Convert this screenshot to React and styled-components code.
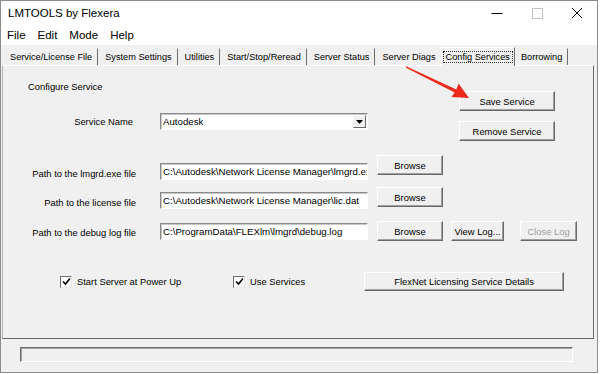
import React from 'react';
import styled, { createGlobalStyle } from 'styled-components';

const GlobalStyle = createGlobalStyle`
  html, body { margin: 0; padding: 0; background: #fff; }
  body {
    width: 600px;
    height: 374px;
    overflow: hidden;
    font-family: "Liberation Sans", Arial, sans-serif;
    color: #000;
  }
`;

const Window = styled.div`
  width: 598px;
  height: 373px;
  box-sizing: border-box;
  border: 1px solid #8c8c8c;
  background: #f0f0f0;
  display: flex;
  flex-direction: column;
`;

const TitleBar = styled.div`
  height: 24px;
  background: #fff;
  display: flex;
  align-items: center;
  padding-left: 7px;
  font-size: 11.5px;
`;

const Title = styled.span`
  flex: 1;
`;

const Controls = styled.div`
  display: flex;
  height: 100%;
`;

const ControlButton = styled.div`
  width: 40px;
  height: 100%;
  display: flex;
  align-items: center;
  justify-content: center;
`;

const MenuBar = styled.div`
  height: 20px;
  background: #fff;
  display: flex;
  align-items: center;
  padding-left: 6px;
  gap: 12px;
  font-size: 11.5px;
`;

const TabStrip = styled.div`
  height: 20px;
  display: flex;
  align-items: flex-end;
  padding-left: 2px;
`;

const Tab = styled.div`
  flex-shrink: 0;
  white-space: nowrap;
  height: ${p => (p.$active ? 19 : 17)}px;
  box-sizing: border-box;
  display: flex;
  align-items: center;
  padding: 0 ${p => (p.$active ? 2 : 3)}px 0 ${p => (p.$active ? 2 : 4)}px;
  font-size: 9.2px;
  border-right: 1px solid #6e6e6e;
  border-left: 1px solid ${p => (p.$active ? '#fff' : 'transparent')};
  border-top: 1px solid ${p => (p.$active ? '#fff' : 'transparent')};
  margin: 0 ${p => (p.$active ? -1 : 0)}px ${p => (p.$active ? -1 : 0)}px;
  background: #f0f0f0;
  position: relative;
  z-index: ${p => (p.$active ? 2 : 1)};

  span {
    padding: 0 2px;
    outline: ${p => (p.$active ? '1px dotted #333' : 'none')};
  }
`;

const Pane = styled.div`
  position: relative;
  height: 274px;
  box-sizing: border-box;
  margin: 0 3px 0 1px;
  border: 1px solid;
  border-color: #fff #696969 #696969 #b4b4b4;
  font-size: 9.4px;
`;

const TopSection = styled.div`
  display: flex;
  height: 75px;
`;

const LeftCol = styled.div`
  width: 365px;
`;

const Heading = styled.div`
  margin: 14px 0 0 25px;
  line-height: 14px;
`;

const ServiceRow = styled.div`
  display: flex;
  align-items: center;
  margin-top: 19px;
`;

const Label = styled.div`
  width: ${p => p.$w}px;
  text-align: right;
  line-height: 14px;
  margin-top: ${p => p.$top || 0}px;
  white-space: nowrap;
`;

const RightCol = styled.div`
  display: flex;
  flex-direction: column;
  gap: 10px;
  margin: 25px 0 0 91px;
`;

const Button = styled.div`
  width: ${p => p.$w}px;
  height: ${p => p.$h || 20}px;
  margin-left: ${p => p.$left || 0}px;
  box-sizing: border-box;
  display: flex;
  align-items: center;
  justify-content: center;
  background: #f0f0f0;
  border: 1px solid;
  border-color: #fff #696969 #696969 #fff;
  box-shadow: inset -1px -1px #a0a0a0;
  color: ${p => (p.$disabled ? '#a0a0a0' : '#000')};
  white-space: nowrap;
`;

const Field = styled.div`
  width: 208px;
  height: 17px;
  margin-left: ${p => p.$left || 0}px;
  margin-top: ${p => p.$top || 0}px;
  box-sizing: border-box;
  background: #fff;
  border: 1px solid;
  border-color: #8a8a8a #fff #fff #8a8a8a;
  box-shadow: inset 1px 1px #c8c8c8;
  display: flex;
  align-items: center;
  padding-left: 2px;
  overflow: hidden;
  white-space: nowrap;
  font-size: 9.7px;
`;

const ComboText = styled.span`
  flex: 1;
`;

const DropButton = styled.div`
  width: 13px;
  height: 13px;
  margin-right: 1px;
  box-sizing: border-box;
  border: 1px solid;
  border-color: #fff #696969 #696969 #fff;
  background: #f0f0f0;
  display: flex;
  align-items: center;
  justify-content: center;
`;

const PathRow = styled.div`
  display: flex;
  align-items: flex-start;
  margin-top: ${p => p.$top}px;
`;

const OptionsRow = styled.div`
  display: flex;
  align-items: center;
  height: 19px;
  margin: 31px 0 0 57px;
`;

const CheckItem = styled.div`
  width: ${p => p.$w}px;
  display: flex;
  align-items: center;
  gap: 5px;
`;

const CheckBox = styled.div`
  width: 12px;
  height: 12px;
  box-sizing: border-box;
  background: #fff;
  border: 1px solid;
  border-color: #6e6e6e #e8e8e8 #e8e8e8 #6e6e6e;
  display: flex;
  align-items: center;
  justify-content: center;
`;

const Arrow = styled.svg`
  position: absolute;
  left: 397px;
  top: -6px;
`;

const StatusArea = styled.div`
  padding: 8px 0 0 19px;
`;

const StatusField = styled.div`
  width: 553px;
  height: 15px;
  box-sizing: border-box;
  border: 1px solid;
  border-color: #6e6e6e #fff #fff #6e6e6e;
  box-shadow: inset 1px 1px #a0a0a0;
`;

const tabs = [
  'Service/License File',
  'System Settings',
  'Utilities',
  'Start/Stop/Reread',
  'Server Status',
  'Server Diags',
  'Config Services',
  'Borrowing',
];

const paths = [
  { label: 'Path to the lmgrd.exe file', value: 'C:\\Autodesk\\Network License Manager\\lmgrd.exe', top: 14, labelTop: 12, fieldTop: 8 },
  { label: 'Path to the license file', value: 'C:\\Autodesk\\Network License Manager\\lic.dat', top: 6, labelTop: 9, fieldTop: 5 },
  { label: 'Path to the debug log file', value: 'C:\\ProgramData\\FLEXlm\\lmgrd\\debug.log', top: 11, labelTop: 5, fieldTop: 2, log: true },
];

const Check = () => (
  <svg width="9" height="9" viewBox="0 0 9 9">
    <polyline points="1,4.5 3.5,7 8,1.5" fill="none" stroke="#000" strokeWidth="1.6" />
  </svg>
);

export default function App() {
  return (
    <>
      <GlobalStyle />
      <Window>
        <TitleBar>
          <Title>LMTOOLS by Flexera</Title>
          <Controls>
            <ControlButton>
              <svg width="12" height="12" viewBox="0 0 12 12">
                <line x1="0.5" y1="6.5" x2="11.5" y2="6.5" stroke="#000" strokeWidth="1" />
              </svg>
            </ControlButton>
            <ControlButton>
              <svg width="11" height="11" viewBox="0 0 11 11">
                <rect x="0.5" y="0.5" width="10" height="10" fill="none" stroke="#c6c6c6" />
              </svg>
            </ControlButton>
            <ControlButton>
              <svg width="12" height="12" viewBox="0 0 12 12">
                <path d="M1 1 L11 11 M11 1 L1 11" stroke="#000" strokeWidth="1" />
              </svg>
            </ControlButton>
          </Controls>
        </TitleBar>

        <MenuBar>
          <span>File</span>
          <span>Edit</span>
          <span>Mode</span>
          <span>Help</span>
        </MenuBar>

        <TabStrip>
          {tabs.map(t => (
            <Tab key={t} $active={t === 'Config Services'}>
              <span>{t}</span>
            </Tab>
          ))}
        </TabStrip>

        <Pane>
          <TopSection>
            <LeftCol>
              <Heading>Configure Service</Heading>
              <ServiceRow>
                <Label $w={130}>Service Name</Label>
                <Field $left={27}>
                  <ComboText>Autodesk</ComboText>
                  <DropButton>
                    <svg width="7" height="4" viewBox="0 0 7 4">
                      <polygon points="0,0 7,0 3.5,4" fill="#000" />
                    </svg>
                  </DropButton>
                </Field>
              </ServiceRow>
            </LeftCol>
            <RightCol>
              <Button $w={96}>Save Service</Button>
              <Button $w={96}>Remove Service</Button>
            </RightCol>
          </TopSection>

          {paths.map(p => (
            <PathRow key={p.label} $top={p.top}>
              <Label $w={133} $top={p.labelTop}>{p.label}</Label>
              <Field $left={24} $top={p.fieldTop}>{p.value}</Field>
              <Button $w={66} $left={9}>Browse</Button>
              {p.log && (
                <>
                  <Button $w={53} $left={8}>View Log...</Button>
                  <Button $w={57} $left={16} $disabled>Close Log</Button>
                </>
              )}
            </PathRow>
          ))}

          <OptionsRow>
            <CheckItem $w={173}>
              <CheckBox><Check /></CheckBox>
              <span>Start Server at Power Up</span>
            </CheckItem>
            <CheckItem $w={131}>
              <CheckBox><Check /></CheckBox>
              <span>Use Services</span>
            </CheckItem>
            <Button $w={200} $h={19}>FlexNet Licensing Service Details</Button>
          </OptionsRow>

          <Arrow width="75" height="45" viewBox="400 60 75 45">
            <polygon
              points="406,66.3 456.3,89.6 458.6,83.5 469,98 451.5,97 454.6,92.4 406,67.8"
              fill="#ee2a1e"
            />
          </Arrow>
        </Pane>

        <StatusArea>
          <StatusField />
        </StatusArea>
      </Window>
    </>
  );
}
